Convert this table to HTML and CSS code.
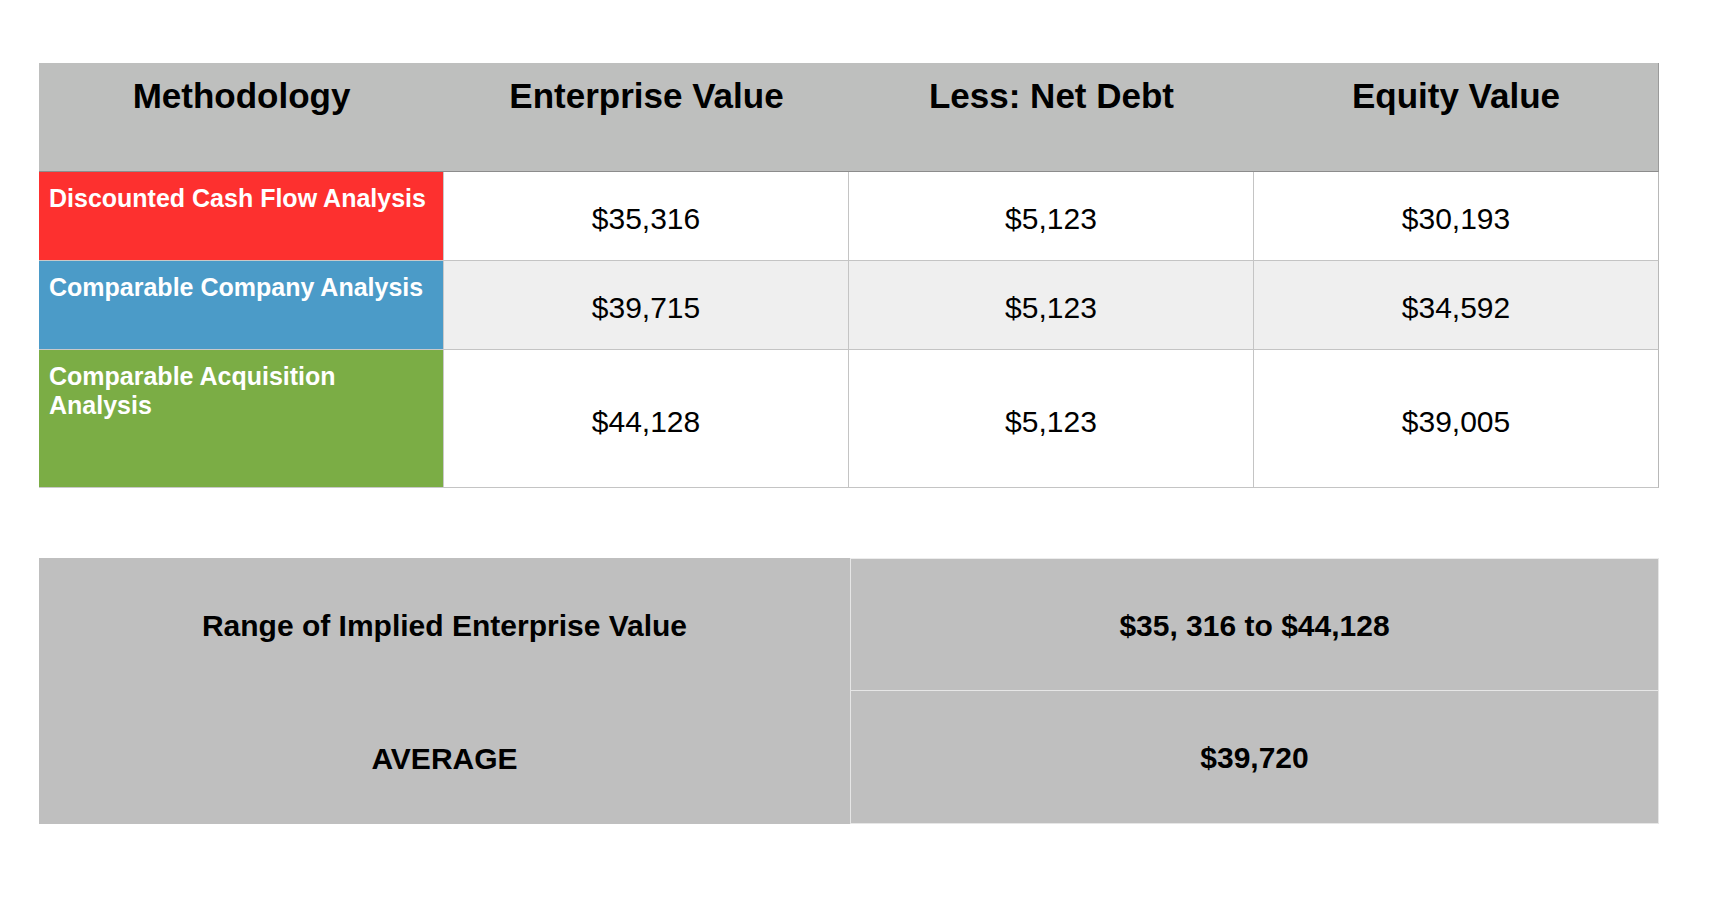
FILE: index.html
```html
<!DOCTYPE html>
<html lang="en">
<head>
<meta charset="utf-8">
<title>Valuation Summary</title>
<link rel="stylesheet" href="styles.css">
</head>
<body>
<main class="page">
  <section class="valuation">
    <div class="head">Methodology</div>
    <div class="head">Enterprise Value</div>
    <div class="head">Less: Net Debt</div>
    <div class="head">Equity Value</div>

    <div class="label red">Discounted Cash Flow Analysis</div>
    <div class="val">$35,316</div>
    <div class="val">$5,123</div>
    <div class="val last">$30,193</div>

    <div class="label blue">Comparable Company Analysis</div>
    <div class="val alt">$39,715</div>
    <div class="val alt">$5,123</div>
    <div class="val alt last">$34,592</div>

    <div class="label green tall">Comparable Acquisition Analysis</div>
    <div class="val tall">$44,128</div>
    <div class="val tall">$5,123</div>
    <div class="val tall last">$39,005</div>
  </section>

  <section class="summary">
    <div class="sum-label">Range of Implied Enterprise Value</div>
    <div class="sum-val first">$35, 316 to $44,128</div>
    <div class="sum-label">AVERAGE</div>
    <div class="sum-val">$39,720</div>
  </section>
</main>
</body>
</html>
```

FILE: styles.css
```css
* { box-sizing: border-box; }

html, body {
  margin: 0;
  padding: 0;
  background: #ffffff;
}

body {
  font-family: "Liberation Sans", Arial, Helvetica, sans-serif;
  color: #000;
}

.page {
  padding: 63px 0 0 39px;
  display: flex;
  flex-direction: column;
  gap: 70px;
}

.valuation {
  display: grid;
  grid-template-columns: repeat(4, 405px);
  grid-template-rows: 109px 89px 89px 138px;
  width: 1620px;
}

.head {
  background: #bebfbe;
  border-bottom: 1px solid #8c8c8c;
  font-weight: bold;
  font-size: 35px;
  line-height: 40px;
  text-align: center;
  padding-top: 13px;
}

.head:nth-child(4) {
  border-right: 1px solid #9a9a9a;
}

.label {
  color: #fff;
  font-weight: bold;
  font-size: 25px;
  line-height: 29px;
  padding: 12px 6px 0 10px;
  border-bottom: 1px solid #c9c9c9;
  border-right: 1px solid #c9c9c9;
}

.red { background: #fd302f; }
.blue { background: #4b9bc8; }
.green { background: #7bad45; }

.val {
  display: flex;
  align-items: center;
  justify-content: center;
  font-size: 30px;
  background: #fff;
  border-bottom: 1px solid #c4c4c4;
  border-right: 1px solid #c4c4c4;
  padding-top: 6px;
}

.val.alt { background: #efefef; }

.val.last { border-right-color: #b8b8b8; }

.summary {
  display: grid;
  grid-template-columns: 811px 809px;
  grid-template-rows: 133px 133px;
  width: 1620px;
  background: #bfbfbf;
}

.sum-label,
.sum-val {
  display: flex;
  align-items: center;
  justify-content: center;
  font-weight: bold;
  font-size: 30px;
  padding-top: 2px;
}

.sum-val {
  border: 1px solid #e6e6e6;
  border-top: 0;
}

.sum-val.first {
  border-top: 1px solid #ececec;
}
```
